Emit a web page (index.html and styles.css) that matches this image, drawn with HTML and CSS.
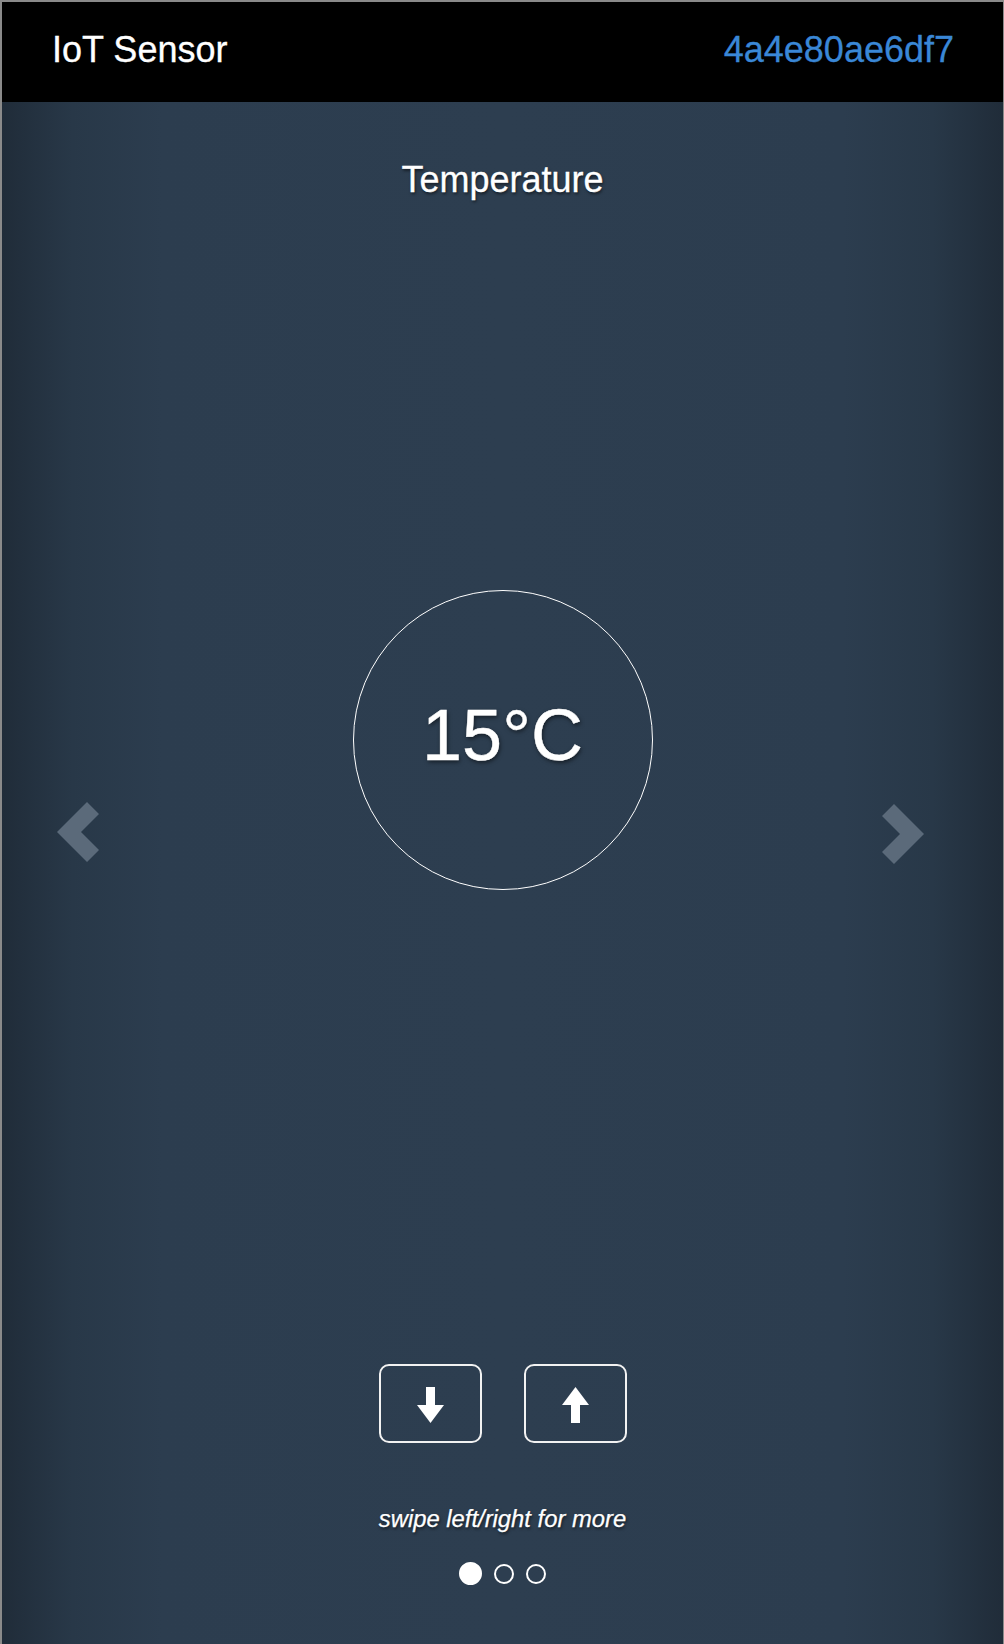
FILE: index.html
```html
<!DOCTYPE html>
<html lang="en">
<head>
<meta charset="utf-8">
<title>IoT Sensor</title>
<link rel="stylesheet" href="styles.css">
</head>
<body>
<header class="topbar">
  <span class="brand">IoT Sensor</span>
  <span class="device-id">4a4e80ae6df7</span>
</header>
<main class="carousel">
  <h1 class="sensor-title">Temperature</h1>
  <div class="gauge"><span class="gauge-value">15°C</span></div>
  <div class="controls">
    <button class="ctrl-btn" type="button" aria-label="decrease">
      <svg width="27" height="36" viewBox="0 0 27 36"><polygon points="9,0 18,0 18,18 27,18 13.5,36 0,18 9,18" fill="#fff"/></svg>
    </button>
    <button class="ctrl-btn" type="button" aria-label="increase">
      <svg width="27" height="36" viewBox="0 0 27 36"><polygon points="13.5,0 27,18 18,18 18,36 9,36 9,18 0,18" fill="#fff"/></svg>
    </button>
  </div>
  <p class="hint">swipe left/right for more</p>
  <div class="dots">
    <span class="dot active"></span>
    <span class="dot"></span>
    <span class="dot"></span>
  </div>
  <a class="nav nav-prev" aria-label="previous">
    <svg width="42" height="60" viewBox="0 0 42 60"><polygon points="30,0 42,12 24,30 42,48 30,60 0,30" fill="currentColor"/></svg>
  </a>
  <a class="nav nav-next" aria-label="next">
    <svg width="42" height="60" viewBox="0 0 42 60"><polygon points="12,0 42,30 12,60 0,48 18,30 0,12" fill="currentColor"/></svg>
  </a>
</main>
</body>
</html>
```
FILE: styles.css
```css
html {
  background: #8a8a8a;
}
body {
  margin: 2px 1px 0 2px;
  min-height: 1642px;
  font-family: "Liberation Sans", Arial, Helvetica, sans-serif;
  color: #fff;
  background: linear-gradient(to right, #202c39 0px, #283848 70px, #2c3d4f 160px, #2d3e50 50%, #2c3d4f calc(100% - 160px), #283848 calc(100% - 70px), #202c39 100%);
}
.topbar {
  box-sizing: border-box;
  height: 100px;
  padding: 28px 49px 0 50px;
  background: #000;
  display: flex;
  justify-content: space-between;
  align-items: flex-start;
  font-size: 36px;
  line-height: 40px;
  -webkit-text-stroke: 0.3px currentColor;
}
.brand {
  color: #fff;
}
.device-id {
  color: #3a87d6;
}
.carousel {
  position: relative;
  box-sizing: border-box;
  height: 1542px;
  padding-top: 58px;
  display: flex;
  flex-direction: column;
  align-items: center;
}
.sensor-title {
  margin: 0;
  font-size: 36px;
  line-height: 40px;
  font-weight: normal;
  -webkit-text-stroke: 0.3px currentColor;
  text-shadow: 1px 2px 3px rgba(0, 0, 0, 0.55);
}
.gauge {
  margin-top: 390px;
  box-sizing: border-box;
  width: 300px;
  height: 300px;
  border: 1.5px solid #fff;
  border-radius: 50%;
  display: flex;
  align-items: center;
  justify-content: center;
}
.gauge-value {
  font-size: 72px;
  line-height: 72px;
  margin-bottom: 10px;
  -webkit-text-stroke: 0.4px currentColor;
  text-shadow: 1px 2px 4px rgba(0, 0, 0, 0.55);
}
.controls {
  margin-top: 474px;
  display: flex;
  gap: 42px;
}
.ctrl-btn {
  box-sizing: border-box;
  width: 103px;
  height: 79px;
  border: 2px solid #f2f2f2;
  border-radius: 10px;
  background: transparent;
  padding: 2px 0 0 0;
  display: flex;
  align-items: center;
  justify-content: center;
}
.hint {
  margin: 62px 0 0;
  font-size: 23.8px;
  line-height: 28px;
  font-style: italic;
  -webkit-text-stroke: 0.25px currentColor;
  text-shadow: 1px 2px 3px rgba(0, 0, 0, 0.55);
}
.dots {
  margin-top: 29px;
  height: 23px;
  display: flex;
  align-items: center;
  gap: 12px;
}
.dot {
  box-sizing: border-box;
  width: 20px;
  height: 20px;
  border: 2px solid #fff;
  border-radius: 50%;
}
.dot.active {
  width: 23px;
  height: 23px;
  background: #fff;
}
.nav {
  position: absolute;
  color: #5b6a7a;
  line-height: 0;
}
.nav-prev {
  left: 55px;
  top: 700px;
}
.nav-next {
  right: 79px;
  top: 702px;
}
```
